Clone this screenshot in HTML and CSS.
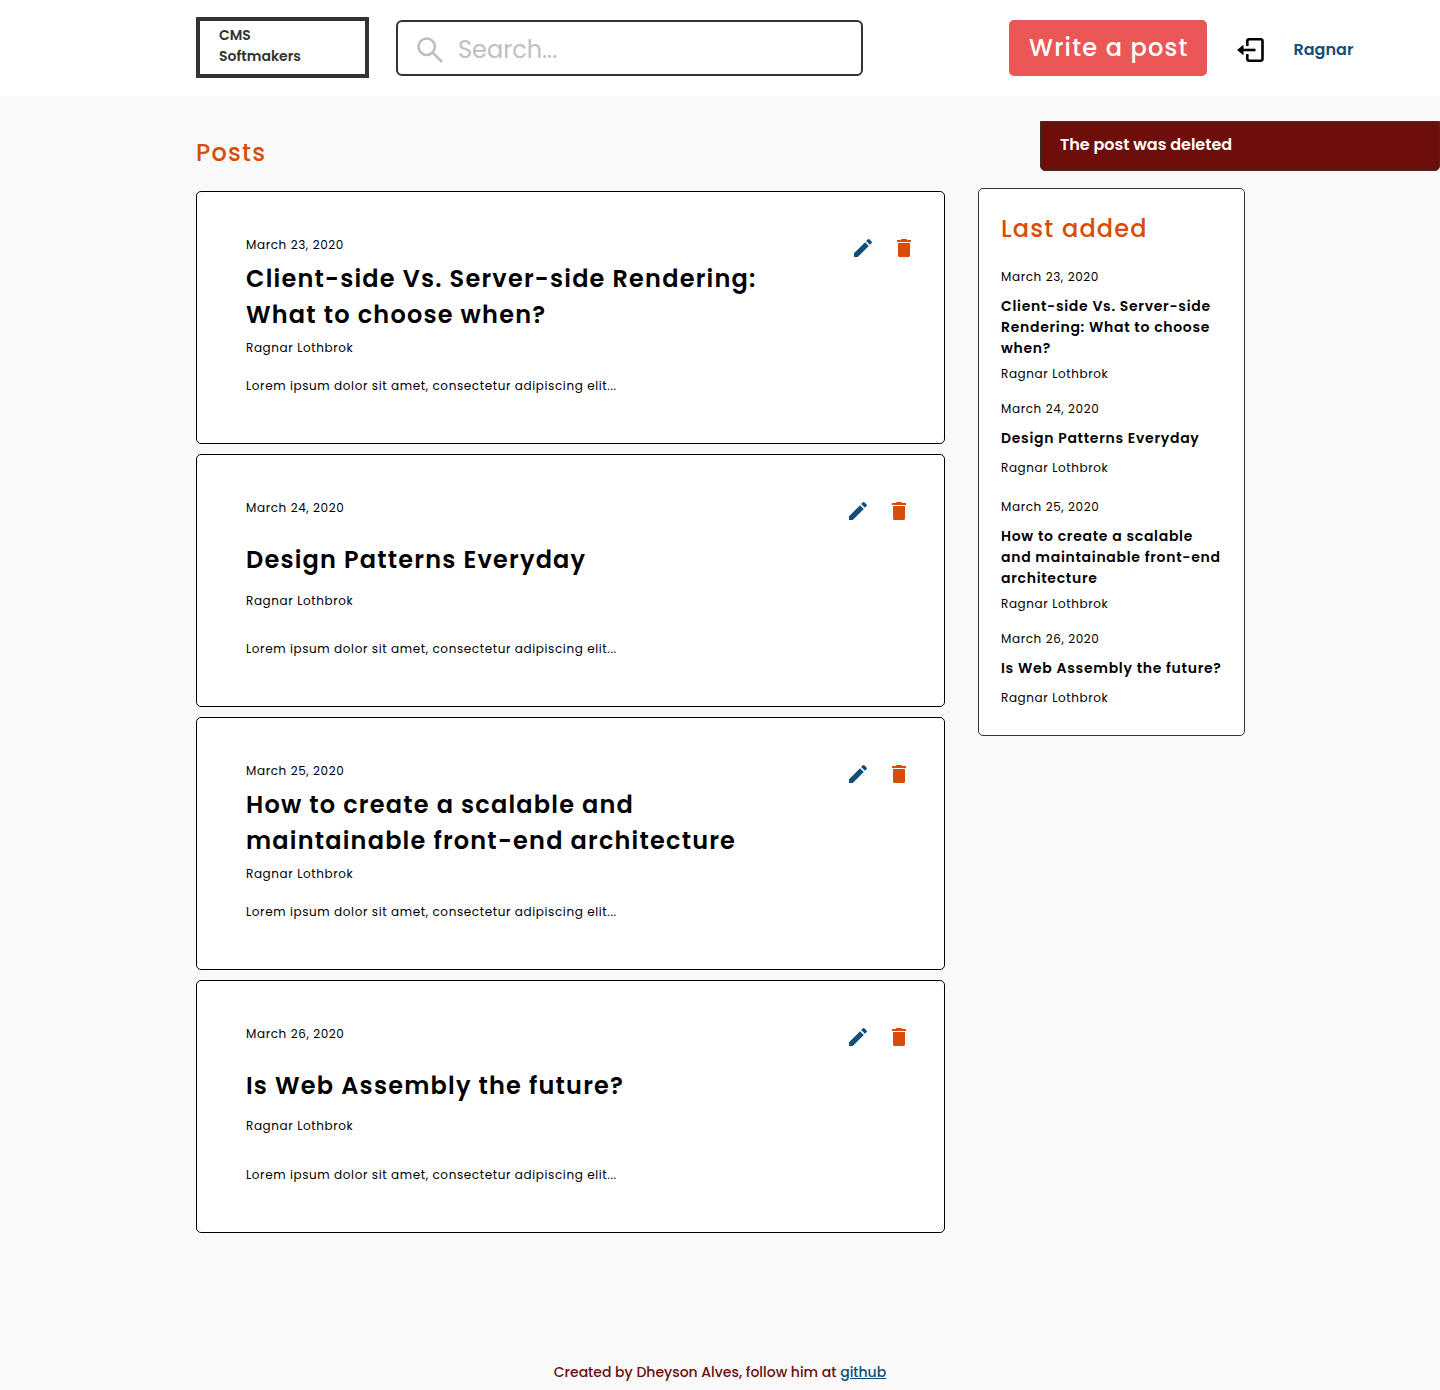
FILE: index.html
```html
<!DOCTYPE html>
<html lang="en">
<head>
<meta charset="utf-8">
<title>CMS Softmakers</title>
<link rel="stylesheet" href="styles.css">
</head>
<body>
<svg class="sprite" aria-hidden="true">
  <symbol id="edit" viewBox="0 0 24 24"><path d="M3 17.25V21h3.75L17.81 9.94l-3.75-3.75L3 17.25zM20.71 7.04a1 1 0 0 0 0-1.41l-2.34-2.34a1 1 0 0 0-1.41 0l-1.83 1.83 3.75 3.75 1.83-1.83z"/></symbol>
  <symbol id="trash" viewBox="0 0 24 24"><path d="M6 19.500c0 .9.6 1.500 1.500 1.500h9c.9 0 1.500-.6 1.500-1.500V7H6v12.500zM19 4h-3.500l-1-1h-5l-1 1H5v2h14V4z"/></symbol>
</svg>

<header class="header">
  <a class="logo"><span>CMS</span><span>Softmakers</span></a>
  <label class="search">
    <svg class="search-icon" viewBox="0 0 26 26"><circle cx="9.7" cy="9.7" r="8.2"/><path d="M15.7 15.7 25 25"/></svg>
    <input class="search-input" type="text" placeholder="Search...">
  </label>
  <button class="write">Write a post</button>
  <svg class="logout" viewBox="0 0 28 24"><path class="logout-door" d="M10.3 8V3.3Q10.3 1.3 12.3 1.3H23.5Q25.5 1.3 25.5 3.3V20.7Q25.5 22.7 23.5 22.7H12.3Q10.3 22.7 10.3 20.7V16"/><path class="logout-door" d="M5 12H18.5"/><path d="M0 12 6.500 6.800V17.200Z"/></svg>
  <a class="user">Ragnar</a>
</header>

<div class="toast">The post was deleted</div>

<main class="main">
  <section class="posts">
    <h1 class="heading posts-heading">Posts</h1>
    <article class="post post-first">
      <div class="post-text">
        <p class="small">March 23, 2020</p>
        <h2 class="title title-long">Client-side Vs. Server-side Rendering:<br>What to choose when?</h2>
        <p class="small">Ragnar Lothbrok</p>
        <p class="small excerpt">Lorem ipsum dolor sit amet, consectetur adipiscing elit...</p>
      </div>
      <div class="actions"><svg class="edit"><use href="#edit"/></svg><svg class="trash"><use href="#trash"/></svg></div>
    </article>
    <article class="post">
      <div class="post-text">
        <p class="small">March 24, 2020</p>
        <h2 class="title">Design Patterns Everyday</h2>
        <p class="small">Ragnar Lothbrok</p>
        <p class="small excerpt">Lorem ipsum dolor sit amet, consectetur adipiscing elit...</p>
      </div>
      <div class="actions"><svg class="edit"><use href="#edit"/></svg><svg class="trash"><use href="#trash"/></svg></div>
    </article>
    <article class="post">
      <div class="post-text">
        <p class="small">March 25, 2020</p>
        <h2 class="title title-long">How to create a scalable and<br>maintainable front-end architecture</h2>
        <p class="small">Ragnar Lothbrok</p>
        <p class="small excerpt">Lorem ipsum dolor sit amet, consectetur adipiscing elit...</p>
      </div>
      <div class="actions"><svg class="edit"><use href="#edit"/></svg><svg class="trash"><use href="#trash"/></svg></div>
    </article>
    <article class="post post-last">
      <div class="post-text">
        <p class="small">March 26, 2020</p>
        <h2 class="title">Is Web Assembly the future?</h2>
        <p class="small">Ragnar Lothbrok</p>
        <p class="small excerpt">Lorem ipsum dolor sit amet, consectetur adipiscing elit...</p>
      </div>
      <div class="actions"><svg class="edit"><use href="#edit"/></svg><svg class="trash"><use href="#trash"/></svg></div>
    </article>
  </section>

  <aside class="latest">
    <h2 class="heading latest-heading">Last added</h2>
    <div class="item item-long">
      <p class="small">March 23, 2020</p>
      <h3 class="item-title">Client-side Vs. Server-side<br>Rendering: What to choose<br>when?</h3>
      <p class="small">Ragnar Lothbrok</p>
    </div>
    <div class="item">
      <p class="small">March 24, 2020</p>
      <h3 class="item-title">Design Patterns Everyday</h3>
      <p class="small">Ragnar Lothbrok</p>
    </div>
    <div class="item item-long">
      <p class="small">March 25, 2020</p>
      <h3 class="item-title">How to create a scalable<br>and maintainable front-end<br>architecture</h3>
      <p class="small">Ragnar Lothbrok</p>
    </div>
    <div class="item">
      <p class="small">March 26, 2020</p>
      <h3 class="item-title">Is Web Assembly the future?</h3>
      <p class="small">Ragnar Lothbrok</p>
    </div>
  </aside>
</main>

<footer class="footer">Created by Dheyson Alves, follow him at <a class="footer-link">github</a></footer>
</body>
</html>
```
FILE: styles.css
```css
* { box-sizing: border-box; margin: 0; padding: 0; }

body {
  position: relative;
  display: flex;
  flex-direction: column;
  min-height: 1390px;
  background: #f9f9f9;
  color: #000;
  font-family: Poppins, Inter, sans-serif;
}

.sprite { position: absolute; width: 0; height: 0; }

/* Header */
.header {
  display: flex;
  align-items: flex-start;
  height: 96px;
  padding: 17px 0 0 196px;
  background: #fff;
}

.logo {
  display: flex;
  flex-direction: column;
  width: 173px;
  height: 61px;
  padding: 4px 19px;
  border: 4px solid #333;
  color: #333;
  font-size: 14px;
  font-weight: 600;
  line-height: 21px;
}

.search {
  display: flex;
  align-items: center;
  width: 467px;
  height: 56px;
  margin: 3px 0 0 27px;
  padding: 2px 0 0 19px;
  border: 2px solid #333;
  border-radius: 6px;
}
.search-icon {
  width: 26px;
  height: 26px;
  margin: 1px 15px 0 0;
  fill: none;
  stroke: #bdbdbd;
  stroke-width: 2.5;
}
.search-input {
  width: 380px;
  height: 48px;
  border: 0;
  outline: 0;
  background: transparent;
  font: 400 24px Poppins, Inter, sans-serif;
}
.search-input::placeholder { color: #c0c0c0; opacity: 1; }

.write {
  width: 198px;
  height: 56px;
  margin: 3px 0 0 146px;
  padding-left: 20px;
  border: 0;
  border-radius: 5px;
  background: #eb5757;
  color: #fff;
  font: 500 24px/54px Poppins, Inter, sans-serif;
  letter-spacing: 0.05em;
  text-align: left;
  white-space: nowrap;
}

.logout { width: 28px; height: 24px; margin: 21px 0 0 30px; }
.logout-door { fill: none; stroke: #000; stroke-width: 2.6; }

.user {
  margin: 21px 0 0 28.5px;
  color: #114e7a;
  font-size: 16px;
  font-weight: 600;
  line-height: 24px;
}

/* Notification */
.toast {
  position: absolute;
  top: 121px;
  right: 0;
  width: 400px;
  height: 50px;
  padding: 11px 19px;
  border: 1px solid #333;
  border-radius: 0 0 5px 5px;
  background: #6d0e0a;
  color: #fff;
  font-size: 16px;
  font-weight: 600;
  line-height: 24px;
}

/* Content */
.main { display: flex; align-items: flex-start; gap: 33px; padding-left: 196px; }

.heading {
  color: #d84c08;
  font-size: 24px;
  font-weight: 500;
  line-height: 36px;
  letter-spacing: 0.05em;
}

.posts { display: flex; flex-direction: column; gap: 10px; width: 749px; }
.posts-heading { height: 85px; padding-top: 39px; }

.post {
  display: flex;
  justify-content: space-between;
  height: 253px;
  padding: 44px 33px 0 49px;
  border: 1px solid #000;
  border-radius: 5px;
  background: #fff;
}
.post-first { padding-right: 28px; }

.small { font-size: 12px; line-height: 18px; letter-spacing: 0.05em; }
.excerpt { margin-top: 30px; }

.title {
  margin: 25px 0 14px;
  font-size: 24px;
  font-weight: 600;
  line-height: 36px;
  letter-spacing: 0.05em;
  white-space: nowrap;
}
.title-long { margin: 7px 0 6px; }
.title-long ~ .excerpt { margin-top: 20px; }
.post-last .title { margin-bottom: 13px; }
.post-last .excerpt { margin-top: 31px; }

.actions { display: flex; gap: 17px; }
.actions svg { width: 24px; height: 24px; }
.edit { fill: #114e7a; }
.trash { fill: #d84c08; }

/* Sidebar */
.latest {
  width: 267px;
  height: 548px;
  margin-top: 92px;
  padding: 22px 0 0 22px;
  border: 1px solid #333;
  border-radius: 5px;
  background: #fff;
}
.latest-heading { margin-bottom: 21px; }
.item { margin-bottom: 21px; }
.item-long { margin-bottom: 17px; }
.item-title {
  margin: 10px 0;
  font-size: 14px;
  font-weight: 600;
  line-height: 21px;
  letter-spacing: 0.05em;
  white-space: nowrap;
}
.item-long .item-title { margin-bottom: 6px; }

/* Footer */
.footer {
  margin-top: auto;
  padding-bottom: 7px;
  color: #6d0e0a;
  font-size: 14px;
  font-weight: 500;
  line-height: 21px;
  text-align: center;
}
.footer-link { color: #114e7a; text-decoration: underline; }
```
